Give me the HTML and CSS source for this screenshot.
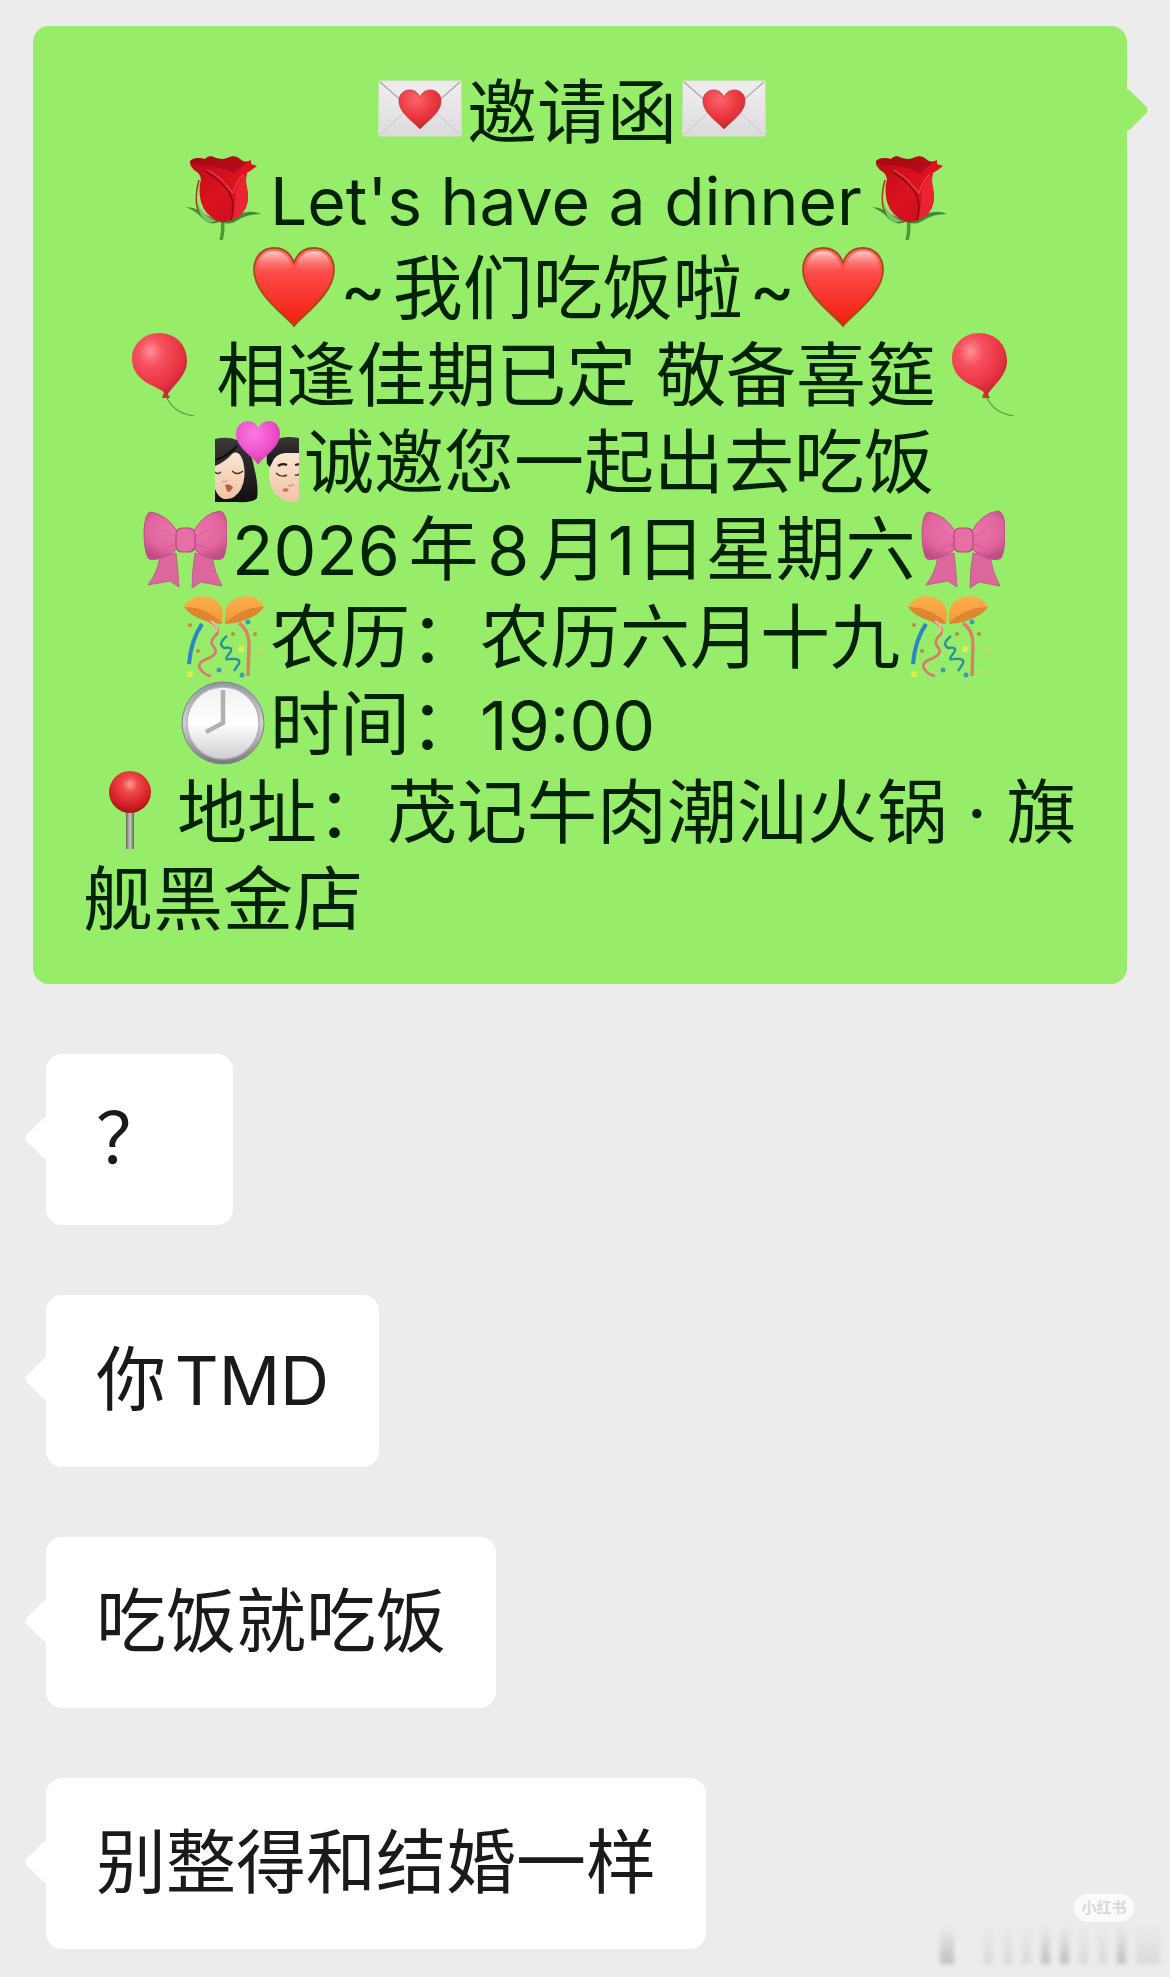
FILE: index.html
```html
<!doctype html>
<html lang="zh-CN">

<head>
<meta charset="utf-8">
<meta name="viewport" content="width=device-width, initial-scale=1">
<title>邀请函</title>
<link rel="stylesheet" href="styles.css">
</head>

<body>

<!-- emoji sprites -->
<svg class="sprites" aria-hidden="true">
  <defs>
    <linearGradient id="g-paper" x1="0" y1="0" x2="0" y2="1">
      <stop offset="0" stop-color="#f1eff0"/>
      <stop offset="1" stop-color="#dcdadd"/>
    </linearGradient>
    <radialGradient id="g-seal" cx=".4" cy=".25" r=".8">
      <stop offset="0" stop-color="#f8666a"/>
      <stop offset=".5" stop-color="#ee3a42"/>
      <stop offset="1" stop-color="#c4222d"/>
    </radialGradient>
    <linearGradient id="g-heart" x1="0" y1="0" x2="0" y2="1">
      <stop offset="0" stop-color="#fb6f6b"/>
      <stop offset=".4" stop-color="#fb4340"/>
      <stop offset="1" stop-color="#f01f0c"/>
    </linearGradient>
    <linearGradient id="g-shine" x1="0" y1="0" x2="0" y2="1">
      <stop offset="0" stop-color="#ffd9d6" stop-opacity=".9"/>
      <stop offset="1" stop-color="#ff6a64" stop-opacity="0"/>
    </linearGradient>
    <linearGradient id="g-rose" x1="0" y1="0" x2="1" y2="1">
      <stop offset="0" stop-color="#b90a16"/>
      <stop offset=".5" stop-color="#dc1220"/>
      <stop offset="1" stop-color="#c30d1c"/>
    </linearGradient>
    <radialGradient id="g-balloon" cx=".34" cy=".3" r=".75">
      <stop offset="0" stop-color="#ff8f95"/>
      <stop offset=".3" stop-color="#f7505e"/>
      <stop offset=".75" stop-color="#e83442"/>
      <stop offset="1" stop-color="#c42432"/>
    </radialGradient>
    <radialGradient id="g-love" cx=".4" cy=".3" r=".75">
      <stop offset="0" stop-color="#fb7be0"/>
      <stop offset=".6" stop-color="#ee4fcb"/>
      <stop offset="1" stop-color="#cf34a8"/>
    </radialGradient>
    <linearGradient id="g-skin" x1="0" y1="0" x2="0" y2="1">
      <stop offset="0" stop-color="#fbe5d3"/>
      <stop offset="1" stop-color="#f0c3a4"/>
    </linearGradient>
    <linearGradient id="g-hair" x1="0" y1="0" x2="0" y2="1">
      <stop offset="0" stop-color="#3b3838"/>
      <stop offset="1" stop-color="#110f10"/>
    </linearGradient>
    <radialGradient id="g-bow" cx=".5" cy=".4" r=".65">
      <stop offset="0" stop-color="#ec7bb0"/>
      <stop offset=".7" stop-color="#e2659e"/>
      <stop offset="1" stop-color="#c04d84"/>
    </radialGradient>
    <linearGradient id="g-cap" x1="0" y1="0" x2="0" y2="1">
      <stop offset="0" stop-color="#fbb04a"/>
      <stop offset="1" stop-color="#f09a3a"/>
    </linearGradient>
    <linearGradient id="g-rim" x1="0" y1="0" x2="0" y2="1">
      <stop offset="0" stop-color="#8e98a3"/>
      <stop offset=".5" stop-color="#d2d2d6"/>
      <stop offset="1" stop-color="#77777c"/>
    </linearGradient>
    <linearGradient id="g-dial" x1="0" y1="0" x2="0" y2="1">
      <stop offset="0" stop-color="#f1f1f3"/>
      <stop offset=".5" stop-color="#ffffff"/>
      <stop offset="1" stop-color="#cfcdd2"/>
    </linearGradient>
    <radialGradient id="g-pin" cx=".5" cy=".32" r=".65">
      <stop offset="0" stop-color="#ff9a94"/>
      <stop offset=".3" stop-color="#ef4747"/>
      <stop offset=".8" stop-color="#d11f24"/>
      <stop offset="1" stop-color="#a8181c"/>
    </radialGradient>
    <linearGradient id="g-needle" x1="0" y1="0" x2="1" y2="0">
      <stop offset="0" stop-color="#5d6158"/>
      <stop offset=".5" stop-color="#c9cdc4"/>
      <stop offset="1" stop-color="#5d6158"/>
    </linearGradient>
  </defs>

  <symbol id="letter" viewBox="0 0 84 84">
    <rect x="1" y="12" width="82" height="55" rx="1" fill="url(#g-paper)" stroke="#e6dfe2"/>
    <path d="M2 66 34 36M82 66 50 36" fill="none" stroke="#c9c5ca" stroke-width="1"/>
    <path d="M2 13 42 48 82 13" fill="#eceaec" stroke="#aaa6ab" stroke-width="1.3"/>
    <path d="M42 60C35 52 21 44 21 32C21 25 26 21 31.500 21C37 21 40 24 42 28C44 24 47 21 52.500 21C58 21 63 25 63 32C63 44 49 52 42 60Z" fill="url(#g-seal)" stroke="#b13b40" stroke-width=".8"/>
  </symbol>

  <symbol id="rose" viewBox="0 0 84 84">
    <path d="M41 62Q43 74 40 84" fill="none" stroke="#4d9a35" stroke-width="3.500"/>
    <path d="M18 24Q13 42 17 54L24 60" fill="none" stroke="#a83a26" stroke-width="1.600"/>
    <path d="M5 51Q14 51 21 57Q31 62 41 65Q29 71 21 62Q15 55 5 51Z" fill="#418a38"/>
    <path d="M17 47Q20 59 35 65L27 67Q17 60 17 47Z" fill="#7fbe66"/>
    <path d="M41 66Q51 60 62 57Q72 54 80 58Q66 58 57 64Q49 70 41 66Z" fill="#418a38"/>
    <path d="M9 5Q14 0 24 3Q28-2 35 2Q42 4 46 2Q54-2 59 3Q64 8 70 4L70 8L76 10Q71 14 66 17Q64 23 66 32Q70 52 57 61Q48 67 39 66Q24 60 20 46Q17 34 20 23Q19 17 13 14Q8 9 9 5Z" fill="url(#g-rose)"/>
    <path d="M9 5Q14 0 24 3Q28-2 35 2Q42 4 46 2Q54-2 59 3Q64 8 70 4Q60 10 53 17Q38 10 24 9Q15 11 9 5Z" fill="#8f0711" opacity=".5"/>
    <path d="M54 36Q58 24 66 18Q64 24 66 32Q70 52 57 61L51 64Q55 50 54 36Z" fill="#ea2433"/>
    <path d="M24 15Q36 22 43 30Q50 37 51 44Q53 54 50 64" fill="none" stroke="#920914" stroke-width="1.600"/>
    <path d="M26 14Q37 19 45 29L52 37Q55 26 63 18" fill="none" stroke="#ea4350" stroke-width="1.200"/>
  </symbol>

  <symbol id="heart" viewBox="0 0 84 84">
    <path d="M43 81C37 72 3 50 3 25C3 11 12 3 23 3C33 3 40 9 43 18C46 9 53 3 63 3C74 3 83 11 83 25C83 50 49 72 43 81Z" fill="url(#g-heart)" stroke="#a84a16" stroke-width="1.800"/>
    <path d="M7 25C6 12 14 6 23 6C33 6 39 13 41 23C33 28 17 31 7 25ZM45 23C47 13 53 6 63 6C72 6 80 12 79 25C69 31 53 28 45 23Z" fill="url(#g-shine)"/>
  </symbol>

  <symbol id="balloon" viewBox="0 0 84 84">
    <path d="M45 64Q52 81 73 84" fill="none" stroke="#6d9a4c" stroke-width="1.300"/>
    <path d="M43 60 41 66 49 66 46 60Z" fill="#c03a35"/>
    <path d="M38 1C55 1 66 13 66 29C66 43 54 52 46 63Q41 58 34 55C20 49 11 40 11 27C11 12 23 1 38 1Z" fill="url(#g-balloon)"/>
  </symbol>

  <symbol id="couple" viewBox="0 0 84 84">
    <path d="M0 20Q12 17 22 21Q36 29 39 48Q44 68 42 79Q38 84 22 83L0 83Z" fill="url(#g-hair)"/>
    <path d="M0 47Q10 43 17 35Q24 30 28 42Q32 58 26 70Q20 81 9 80Q3 78 0 70Z" fill="url(#g-skin)"/>
    <path d="M0 41Q12 38 22 27" fill="none" stroke="#0f0d0e" stroke-width="2"/>
    <path d="M17 52Q22 57 28 52M0 53Q3 56 6 53" fill="none" stroke="#4a3029" stroke-width="1.400"/>
    <path d="M7 62Q10 64 12 61" fill="none" stroke="#d49577" stroke-width="1.200"/>
    <path d="M10 66Q14 64 18 68Q16 73 13 73Q11 71 10 66Z" fill="#b65f51"/>
    <path d="M52 45Q50 28 60 21Q70 16 84 19L84 46 57 50Z" fill="url(#g-hair)"/>
    <path d="M57 44Q60 35 70 34L84 34L84 81Q74 86 65 79Q54 71 54 56Q54 48 57 44Z" fill="url(#g-skin)"/>
    <path d="M63 47Q67 44 72 46M80 46 84 45" fill="none" stroke="#221b18" stroke-width="2.200"/>
    <path d="M61 54Q66 59 72 56M80 56Q82 57 84 55" fill="none" stroke="#4a3029" stroke-width="1.400"/>
    <path d="M73 66Q76 68 79 65" fill="none" stroke="#d49577" stroke-width="1.200"/>
    <path d="M67 71Q71 67 74 71Q71 75 67 71Z" fill="#c47362"/>
    <path d="M43 46C39 38 21 29 21 15C21 7 27 2 33 2C38 2 42 5 43.500 9C45 5 49 2 54 2C60 2 65 7 65 15C65 29 48 38 43 46Z" fill="url(#g-love)"/>
  </symbol>

  <symbol id="bow" viewBox="0 0 84 84">
    <path d="M17 50 33 47Q35 64 36 81L27 75 5 79Q15 66 17 50ZM69 50 52 47Q49 65 49 82L58 76 79 80Q71 66 69 50Z" fill="#db679d" stroke="#b95384" stroke-width=".8"/>
    <path d="M34 25Q24 9 8 6Q2 6 1 25Q1 44 5 52Q8 55 18 52Q28 49 34 43ZM51 25Q61 7 77 5Q84 6 84 25Q84 46 80 52Q76 55 66 52Q56 48 51 43Z" fill="url(#g-bow)" stroke="#c05087" stroke-width="1"/>
    <path d="M33 31 20 24M33 38 21 42M52 31 64 24M52 38 64 42" stroke="#c9518c" stroke-width="1.400" opacity=".4"/>
    <rect x="33" y="22" width="19" height="24" rx="6" fill="#e56fa6" stroke="#b8487e" stroke-width="1.200"/>
  </symbol>

  <symbol id="confetti" viewBox="0 0 84 84">
    <path d="M3 13Q8 3 20 2Q34 2 40 12Q43 19 41 30Q24 26 3 13Z" fill="url(#g-cap)"/>
    <path d="M3 13Q18 13 28 19Q38 24 41 30Q33 30 25 27Q9 22 3 13Z" fill="#dd8530"/>
    <path d="M83 13Q78 3 66 2Q52 2 46 12Q43 19 44 30Q62 26 83 13Z" fill="url(#g-cap)"/>
    <path d="M83 13Q68 13 58 19Q48 24 44 30Q53 30 61 27Q77 22 83 13Z" fill="#dd8530"/>
    <path d="M21 30Q10 46 8 70" fill="none" stroke="#2d86c0" stroke-width="4"/>
    <path d="M28 27Q39 32 36 40Q28 47 32 52Q39 59 28 64Q14 69 20 76Q24 81 30 82" fill="none" stroke="#d9796b" stroke-width="2.600"/>
    <path d="M30 27Q38 31 35 38" fill="none" stroke="#f5b8a5" stroke-width="2"/>
    <path d="M58 29Q68 36 68 51L67 82" fill="none" stroke="#d88263" stroke-width="3.400"/>
    <path d="M46 42Q36 50 43 54Q54 52 48 60Q42 67 49 65Q62 64 57 71L53 77" fill="none" stroke="#2c8f9a" stroke-width="2.300"/>
    <g fill="#c98543"><circle cx="9" cy="31" r="2"/><circle cx="17" cy="57" r="2"/><circle cx="52" cy="40" r="2"/><circle cx="74" cy="40" r="2"/></g>
    <g fill="#e0ee50"><circle cx="9" cy="80" r="3"/><circle cx="60" cy="55" r="3"/></g>
    <g fill="#3b9fb0"><circle cx="38" cy="76" r="2.500"/><circle cx="61" cy="81" r="2.500"/><circle cx="67" cy="28" r="2.500"/></g>
    <g fill="#cfd760"><circle cx="81" cy="56" r="2.500"/><circle cx="78" cy="77" r="2"/></g>
  </symbol>

  <symbol id="clock" viewBox="0 0 84 84">
    <circle cx="42" cy="42" r="41" fill="url(#g-rim)" stroke="#7e828a" stroke-width="1"/>
    <circle cx="42" cy="42" r="36" fill="url(#g-dial)" stroke="#b4b4ba" stroke-width="1.500"/>
    <path d="M42 9V42L25 51" fill="none" stroke="#b1b0b4" stroke-width="4.500"/>
  </symbol>

  <symbol id="pin" viewBox="0 0 84 84">
    <rect x="38" y="42" width="8" height="38" fill="url(#g-needle)"/>
    <circle cx="42" cy="23" r="21" fill="url(#g-pin)"/>
  </symbol>
</svg>

<main class="chat">

  <div class="bubble mine">
    <p class="line in-7"><svg class="emoji"><use href="#letter"/></svg>邀请函<svg class="emoji"><use href="#letter"/></svg></p>
    <p class="line in-3"><svg class="emoji"><use href="#rose"/></svg><span class="english">Let's have a dinner</span><svg class="emoji"><use href="#rose"/></svg></p>
    <p class="line in-5"><svg class="emoji"><use href="#heart"/></svg>~&hairsp;我们吃饭啦&hairsp;~<svg class="emoji"><use href="#heart"/></svg></p>
    <p class="line in-1"><svg class="emoji"><use href="#balloon"/></svg>&hairsp;相逢佳期已定 敬备喜筵<svg class="emoji"><use href="#balloon"/></svg></p>
    <p class="line in-4"><svg class="emoji"><use href="#couple"/></svg>诚邀您一起出去吃饭</p>
    <p class="line in-2"><svg class="emoji"><use href="#bow"/></svg><span class="latin">2026</span>年<span class="latin">8</span>月<span class="tight"><span class="latin">1</span>日</span>星期六<svg class="emoji"><use href="#bow"/></svg></p>
    <p class="line in-3"><svg class="emoji"><use href="#confetti"/></svg>农历：农历六月十九<svg class="emoji"><use href="#confetti"/></svg></p>
    <p class="line in-3"><svg class="emoji"><use href="#clock"/></svg>时间：<span class="latin">19:00</span></p>
    <p class="line"><svg class="emoji"><use href="#pin"/></svg>地址：茂记牛肉潮汕火锅 · 旗舰黑金店</p>
  </div>

  <div class="bubble theirs">？</div>
  <div class="bubble theirs">你<span class="latin">TMD</span></div>
  <div class="bubble theirs">吃饭就吃饭</div>
  <div class="bubble theirs">别整得和结婚一样</div>

  <div class="watermark">
    <span class="badge">小红书</span>
    <div class="smudge"><i class="dark"></i><i></i><i></i><i></i><i class="dark"></i><i class="dark"></i><i></i><i></i><i class="dark"></i><i></i></div>
  </div>

</main>

</body>

</html>
```
FILE: styles.css
```css
* {
  box-sizing: border-box;
}

body {
  margin: 0;
  background: #ececec;
  color: #1a1a1a;
  font-family: Inter, "Noto Sans CJK SC", sans-serif;
  font-size: 70px;
  line-height: 87px;
  text-autospace: normal;
}

.sprites {
  position: absolute;
  width: 0;
  height: 0;
}

.chat {
  position: relative;
  display: flex;
  flex-direction: column;
  align-items: flex-start;
  gap: 70px;
  padding: 26px 43px 27px 33px;
}

/* bubbles */
.bubble {
  position: relative;
  padding: 41px 50px 43px;
  border-radius: 16px;
}

.bubble::before {
  content: "";
  position: absolute;
  top: 68px;
  width: 32px;
  height: 32px;
  border-radius: 5px;
  background: inherit;
  transform: rotate(45deg);
}

.mine {
  align-self: stretch;
  padding: 43px 40px 41px 50px;
  background: #97ed6a;
  color: #002204;
}

.mine::before {
  right: -16px;
}

.theirs {
  min-width: 187px;
  margin-left: 13px;
  background: #fff;
}

.theirs::before {
  left: -16px;
}

.line {
  margin: 0;
}

.in-1 { padding-left: 33px; }
.in-2 { padding-left: 55px; }
.in-3 { padding-left: 93px; }
.in-4 { padding-left: 127px; }
.in-5 { padding-left: 163px; }
.in-7 { padding-left: 290px; }

.latin {
  font-size: 68px;
}

.english {
  font-size: 66px;
}

.tight {
  text-autospace: no-autospace;
}

.emoji {
  width: 84px;
  height: 84px;
  margin: 0 5px;
  vertical-align: -15px;
  overflow: visible;
}

/* corner mark */
.watermark {
  position: absolute;
  right: 10px;
  bottom: 12px;
  width: 226px;
}

.badge {
  display: block;
  width: 60px;
  margin: 0 26px 4px auto;
  border-radius: 14px;
  background: #fafafa;
  color: #d8d8d8;
  font-size: 15px;
  font-weight: 700;
  line-height: 28px;
  text-align: center;
}

.smudge {
  display: flex;
  justify-content: space-between;
  height: 38px;
  padding-left: 6px;
  filter: blur(2px);
}

.smudge i {
  width: 9px;
  background: linear-gradient(rgba(190, 190, 190, 0), rgba(190, 190, 190, .4));
}

.smudge .dark {
  background: linear-gradient(rgba(180, 180, 180, 0), rgba(180, 180, 180, .8));
}

.smudge i:first-child {
  width: 14px;
  margin-right: 20px;
}

.smudge i:last-child {
  width: 24px;
}
```
